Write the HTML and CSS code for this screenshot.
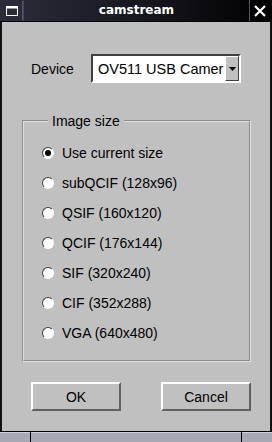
FILE: index.html
```html
<!DOCTYPE html>
<html lang="en">
<head>
    <meta charset="UTF-8">
    <title>camstream</title>
    <link rel="stylesheet" href="styles.css">
</head>
<body>
    <div class="window">
        <div class="titlebar">
            <div class="tb-menu">
                <svg width="12" height="10" viewBox="0 0 12 10">
                    <rect x="0.5" y="0.5" width="11" height="9" fill="none" stroke="#fff"/>
                    <rect x="0.5" y="0.5" width="11" height="2" fill="#fff"/>
                </svg>
            </div>
            <div class="tb-title">camstream</div>
            <div class="tb-close">
                <svg width="12" height="12" viewBox="0 0 12 12">
                    <path d="M1 1 L11 11 M11 1 L1 11" stroke="#fff" stroke-width="2.2"/>
                </svg>
            </div>
        </div>

        <div class="frame">
            <div class="device-row">
                <span class="label">Device</span>
                <div class="combo">
                    <span class="combo-text">OV511 USB Camer</span>
                    <span class="combo-btn">
                        <svg width="7" height="4" viewBox="0 0 7 4"><path d="M0 0 H7 L3.5 4 Z" fill="#000"/></svg>
                    </span>
                </div>
            </div>

            <fieldset class="group">
                <legend>Image size</legend>
                <label class="radio"><span class="dot checked"></span>Use current size</label>
                <label class="radio"><span class="dot"></span>subQCIF (128x96)</label>
                <label class="radio"><span class="dot"></span>QSIF (160x120)</label>
                <label class="radio"><span class="dot"></span>QCIF (176x144)</label>
                <label class="radio"><span class="dot"></span>SIF (320x240)</label>
                <label class="radio"><span class="dot"></span>CIF (352x288)</label>
                <label class="radio"><span class="dot"></span>VGA (640x480)</label>
            </fieldset>

            <div class="buttons">
                <button class="btn">OK</button>
                <button class="btn">Cancel</button>
            </div>
        </div>

        <div class="statusbar">
            <div class="grip"></div>
            <div class="grip wide"></div>
            <div class="grip"></div>
        </div>
    </div>
</body>
</html>
```

FILE: styles.css
```css
body {
    margin: 0;
    font-family: "Liberation Sans", Arial, sans-serif;
    font-size: 14px;
    color: #000;
    background: #000;
}
.window {
    width: 272px;
    height: 442px;
    display: flex;
    flex-direction: column;
}
.titlebar {
    height: 22px;
    display: flex;
    background: linear-gradient(to right, #2c2c3c, #181820 50%, #000);
    border-bottom: 1px solid #000;
    box-sizing: border-box;
}
.tb-menu {
    width: 21px;
    margin: 1px 0 1px 1px;
    display: flex;
    align-items: center;
    justify-content: center;
    background: #2a2a3a;
    border-right: 1px solid #55556a;
}
.tb-title {
    flex: 1;
    color: #fff;
    font-family: "DejaVu Sans", sans-serif;
    font-weight: bold;
    font-size: 12px;
    text-align: center;
    line-height: 21px;
    border-left: 1px solid #44445a;
}
.tb-close {
    width: 20px;
    margin-right: 2px;
    display: flex;
    align-items: center;
    justify-content: center;
    background: #000;
    border-left: 1px solid #55556a;
}
.frame {
    flex: 1;
    background: #c0c0c0;
    border-left: 2px solid #101010;
    border-right: 2px solid #101010;
    display: flex;
    flex-direction: column;
}
.device-row {
    display: flex;
    align-items: center;
    margin: 32px 0 0 29px;
    height: 29px;
}
.label {
    width: 60px;
}
.combo {
    width: 150px;
    height: 29px;
    box-sizing: border-box;
    border: 2px solid;
    border-color: #404040 #fff #fff #404040;
    background: #fff;
    display: flex;
    align-items: center;
    overflow: hidden;
}
.combo-text {
    flex: 1;
    padding-left: 5px;
    font-size: 14.5px;
    white-space: nowrap;
}
.combo-btn {
    width: 14px;
    height: 25px;
    box-sizing: border-box;
    background: #c0c0c0;
    border: 1px solid;
    border-color: #fff #404040 #404040 #fff;
    display: flex;
    align-items: center;
    justify-content: center;
}
.group {
    margin: 30px 0 0 20px;
    width: 229px;
    height: 249px;
    box-sizing: border-box;
    padding: 15px 0 0 18px;
    border: 2px groove #e0e0e0;
    display: flex;
    flex-direction: column;
    gap: 12px;
}
.group legend {
    margin-left: 6px;
    padding: 0 4px;
    line-height: 16px;
}
.radio {
    display: flex;
    align-items: center;
    height: 18px;
}
.dot {
    width: 10px;
    height: 10px;
    border-radius: 50%;
    background: #fff;
    border: 1px solid #fff;
    border-top-color: #404040;
    border-left-color: #404040;
    box-shadow: 0 0 0 1px #c0c0c0;
    margin-right: 8px;
    position: relative;
}
.dot.checked::after {
    content: "";
    position: absolute;
    left: 2px;
    top: 2px;
    width: 6px;
    height: 6px;
    border-radius: 50%;
    background: #000;
}
.buttons {
    display: flex;
    gap: 40px;
    margin: 20px 0 0 29px;
}
.btn {
    width: 90px;
    height: 29px;
    font-family: "Liberation Sans", Arial, sans-serif;
    font-size: 14px;
    background: #c0c0c0;
    border: 2px solid;
    border-color: #fff #606060 #606060 #fff;
    padding: 0;
}
.statusbar {
    height: 10px;
    display: flex;
    background: #000;
    border-top: 1px solid #000;
    gap: 1px;
}
.grip {
    width: 30px;
    background: #a8a8b4;
    border-top: 1px solid #d0d0e0;
}
.grip.wide {
    flex: 1;
}
```
